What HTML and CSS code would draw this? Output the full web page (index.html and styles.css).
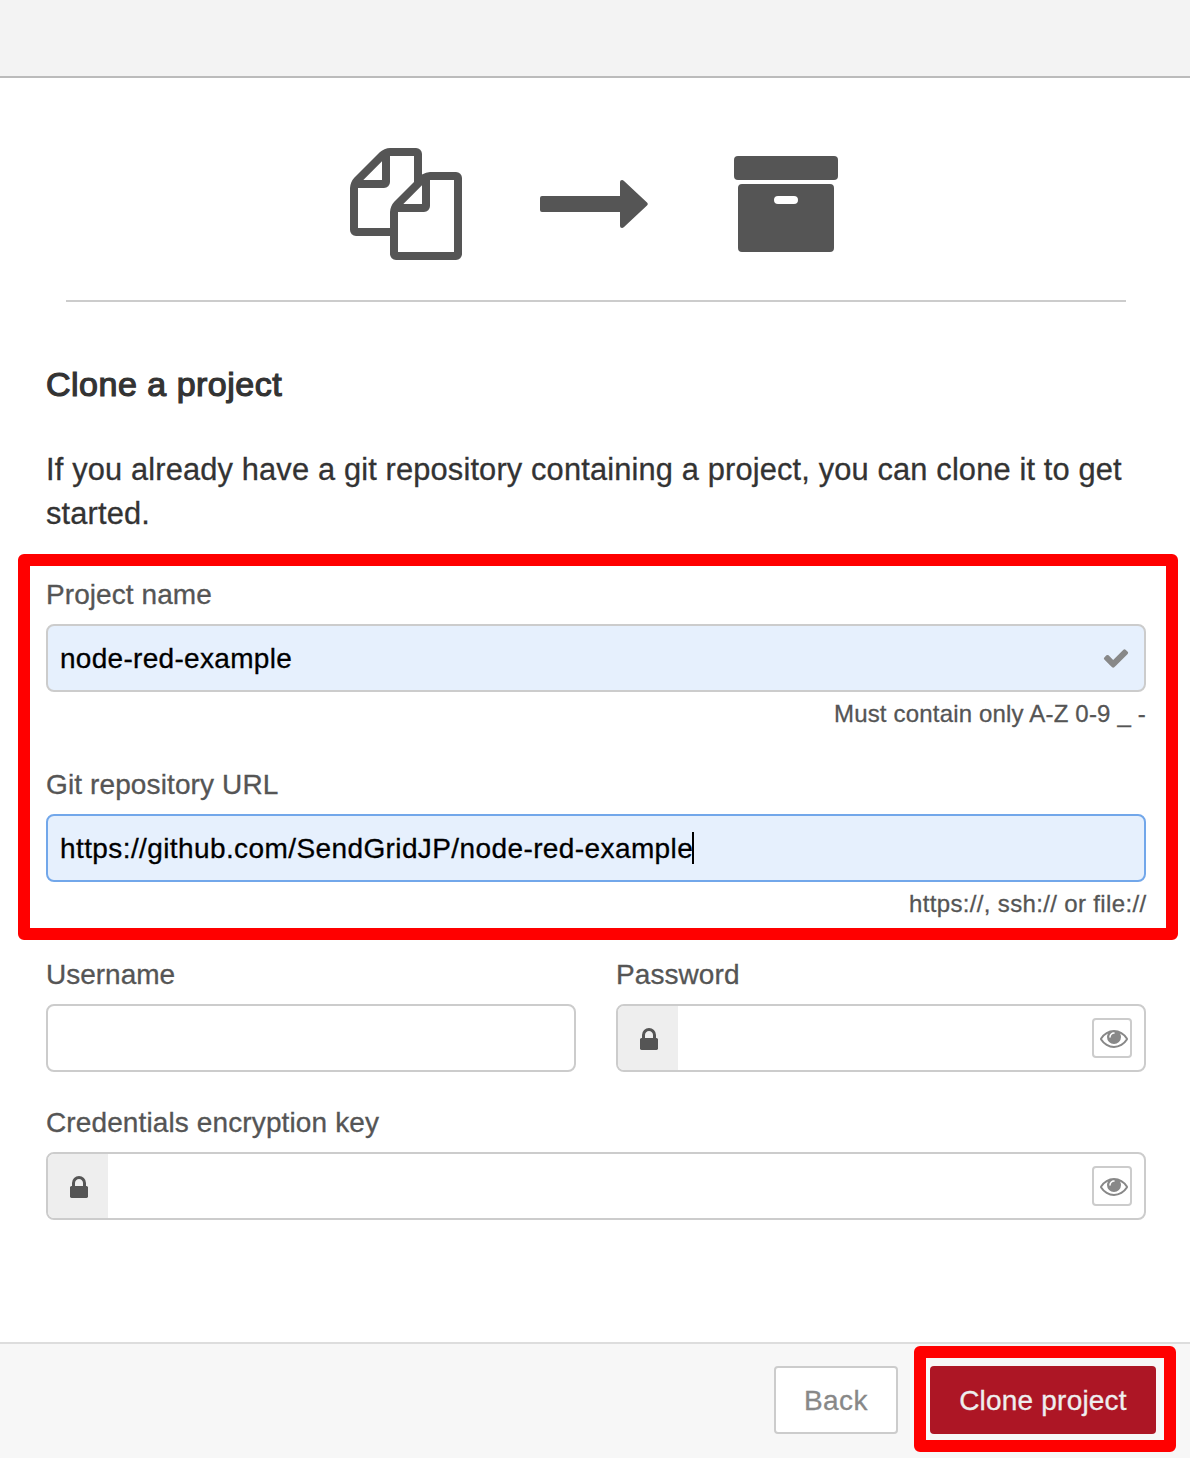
FILE: index.html
```html
<!DOCTYPE html>
<html lang="en">
<head>
<meta charset="utf-8">
<title>Clone a project</title>
<link rel="stylesheet" href="styles.css">
</head>
<body>
<svg class="sprite" aria-hidden="true">
  <symbol id="lock" viewBox="0 0 1792 1792"><path d="M640 768h512v-192q0-106-75-181t-181-75-181 75-75 181v192zm832 96v576q0 40-28 68t-68 28h-960q-40 0-68-28t-28-68v-576q0-40 28-68t68-28h32v-192q0-184 132-316t316-132 316 132 132 316v192h32q40 0 68 28t28 68z"/></symbol>
  <symbol id="eye" viewBox="0 0 1792 1792"><path d="M1664 960q-152-236-381-353 61 104 61 225 0 185-131.5 316.5t-316.5 131.5-316.5-131.5-131.5-316.5q0-121 61-225-229 117-381 353 133 205 333.5 326.5t434.5 121.5 434.5-121.5 333.5-326.5zm-720-384q0-20-14-34t-34-14q-125 0-214.5 89.5t-89.5 214.5q0 20 14 34t34 14 34-14 14-34q0-86 61-147t147-61q20 0 34-14t14-34zm848 384q0 34-20 69-140 230-376.5 368.5t-499.5 138.5-499.5-139-376.5-368q-20-35-20-69t20-69q140-229 376.5-368t499.5-139 499.5 139 376.5 368q20 35 20 69z"/></symbol>
</svg>
<div class="dialog">
  <header class="titlebar"></header>
  <main class="content">
    <div class="steps">
      <svg class="files" viewBox="0 0 1792 1792"><path d="M1696 384q40 0 68 28t28 68v1216q0 40-28 68t-68 28h-960q-40 0-68-28t-28-68v-288h-544q-40 0-68-28t-28-68v-672q0-40 20-88t48-76l408-408q28-28 76-48t88-20h416q40 0 68 28t28 68v328q68-40 128-40h416zm-544 213l-299 299h299v-299zm-640-384l-299 299h299v-299zm196 647l316-316v-416h-384v416q0 40-28 68t-68 28h-416v640h512v-256q0-40 20-88t48-76zm956 804v-1152h-384v416q0 40-28 68t-68 28h-416v640h896z"/></svg>
      <svg class="arrow" viewBox="0 0 108 48"><path d="M2 16H80V2Q80 0 82 0Q83 0 84 1L107 22.500Q108.500 24 107 25.500L84 47Q83 48 82 48Q80 48 80 46V32H2Q0 32 0 30V18Q0 16 2 16Z"/></svg>
      <svg class="archive" viewBox="0 0 104 96"><rect width="104" height="24" rx="4"/><path fill-rule="evenodd" d="M8 28H96Q100 28 100 32V92Q100 96 96 96H8Q4 96 4 92V32Q4 28 8 28ZM44 40A4 4 0 0 0 44 48H60A4 4 0 0 0 60 40Z"/></svg>
    </div>
    <h1 class="title">Clone a project</h1>
    <p class="intro"><span class="intro-first">If you already have a git repository containing a project, you can clone it to get</span> started.</p>
    <section class="field">
      <div class="label name-label">Project name</div>
      <div class="input filled"><span class="name-value">node-red-example</span>
        <svg class="check" viewBox="0 0 1792 1792"><path d="M1671 566q0 40-28 68l-724 724-136 136q-28 28-68 28t-68-28l-136-136-362-362q-28-28-28-68t28-68l136-136q28-28 68-28t68 28l294 295 656-657q28-28 68-28t68 28l136 136q28 28 28 68z"/></svg>
      </div>
      <div class="hint"><span class="name-hint">Must contain only A-Z 0-9 _ -</span></div>
    </section>
    <section class="field">
      <div class="label url-label">Git repository URL</div>
      <div class="input filled focused"><span class="url-value">https://github.com/SendGridJP/node-red-example</span><i class="caret"></i></div>
      <div class="hint"><span class="url-hint">https://, ssh:// or file://</span></div>
    </section>
    <div class="columns">
      <section>
        <div class="label user-label">Username</div>
        <div class="input"></div>
      </section>
      <section>
        <div class="label pass-label">Password</div>
        <div class="input secret"><span class="addon"><svg><use href="#lock"/></svg></span><span class="reveal"><svg><use href="#eye"/></svg></span></div>
      </section>
    </div>
    <section>
      <div class="label key-label">Credentials encryption key</div>
      <div class="input secret"><span class="addon"><svg><use href="#lock"/></svg></span><span class="reveal"><svg><use href="#eye"/></svg></span></div>
    </section>
  </main>
  <footer class="footer">
    <div class="button back"><span>Back</span></div>
    <div class="button primary"><span>Clone project</span></div>
  </footer>
  <div class="highlight highlight-fields"></div>
  <div class="highlight highlight-submit"></div>
</div>
</body>
</html>
```
FILE: styles.css
```css
* { box-sizing: border-box; }
body {
  margin: 0;
  background: #fff;
  color: #555;
  font: 28px/40px "Liberation Sans", Arial, sans-serif;
  -webkit-text-stroke: 0.3px currentColor;
}
.sprite { display: none; }
svg { -webkit-text-stroke: 0; }
.dialog {
  position: relative;
  display: flex;
  flex-direction: column;
  width: 1190px;
  height: 1458px;
  overflow: hidden;
  white-space: nowrap;
}
.titlebar {
  height: 78px;
  background: #f3f3f3;
  border-bottom: 2px solid #bbb;
}
.content {
  flex: 1;
  padding: 0 44px 0 46px;
}
.steps {
  display: flex;
  align-items: center;
  height: 224px;
  margin: 0 20px;
  padding: 30px 0 0 284px;
  border-bottom: 2px solid #ccc;
  fill: #555;
}
.files { width: 112px; height: 112px; }
.arrow { width: 108px; height: 48px; margin-left: 78px; }
.archive { width: 104px; height: 96px; margin-left: 86px; }
.title {
  margin: 62px 0 0;
  color: #333;
  font-size: 34px;
  font-weight: 400;
  line-height: 40px;
  letter-spacing: 0.5px;
  -webkit-text-stroke: 1.2px #333;
}
.intro {
  margin: 44px 0 0;
  color: #333;
  font-size: 30.800px;
  line-height: 44px;
  letter-spacing: 0.155px;
}
.intro-first { display: block; }
.field { height: 190px; }
.intro + .field { margin-top: 38px; }
.label {
  height: 50px;
  padding-top: 1px;
  letter-spacing: 0.08px;
}
.url-label, .key-label { letter-spacing: 0.12px; }
.user-label { letter-spacing: 0; }
.input {
  display: flex;
  align-items: center;
  height: 68px;
  border: 2px solid #ccc;
  border-radius: 8px;
  background: #fff;
  overflow: hidden;
}
.filled {
  padding: 0 14px 0 12px;
  background: #e6f0fd;
  color: #000;
}
.filled span { padding-top: 2px; }
.name-value { letter-spacing: 0.3px; }
.url-value { letter-spacing: 0.4px; }
.focused { border-color: #72a7ea; }
.check {
  width: 28px;
  height: 28px;
  margin-left: auto;
  fill: #888;
}
.caret {
  width: 2px;
  height: 32px;
  margin-left: -1px;
  background: #000;
}
.hint {
  padding-top: 2px;
  font-size: 24px;
  text-align: right;
}
.name-hint { letter-spacing: 0.18px; }
.url-hint { letter-spacing: 0.35px; margin-right: -0.5px; }
.columns {
  display: grid;
  grid-template-columns: 530px 530px;
  gap: 40px;
  height: 148px;
}
.secret { justify-content: space-between; }
.addon {
  display: flex;
  align-items: center;
  width: 60px;
  height: 64px;
  padding: 4px 0 0 17px;
  background: #eee;
  fill: #555;
}
.addon svg, .reveal svg { flex: none; width: 28px; height: 28px; }
.reveal {
  display: flex;
  width: 40px;
  height: 40px;
  margin-right: 12px;
  padding: 4px 0 0 6px;
  border: 2px solid #ccc;
  border-radius: 4px;
  fill: #888;
}
.footer {
  display: flex;
  gap: 32px;
  justify-content: flex-end;
  height: 116px;
  padding: 22px 34px 0 0;
  background: #f7f7f7;
  border-top: 2px solid #ddd;
}
.button {
  display: flex;
  align-items: center;
  justify-content: center;
  height: 68px;
  padding-top: 2px;
  border-radius: 4px;
  letter-spacing: 0.2px;
}
.back {
  width: 124px;
  border: 2px solid #ccc;
  background: #fff;
  color: #888;
  letter-spacing: 0.5px;
}
.primary {
  width: 226px;
  background: #ad1625;
  color: #eee;
}
.highlight {
  position: absolute;
  border: 12px solid #f00;
  border-radius: 6px;
}
.highlight-fields { left: 18px; top: 554px; width: 1160px; height: 386px; }
.highlight-submit { left: 914px; top: 1346px; width: 262px; height: 106px; }
```
